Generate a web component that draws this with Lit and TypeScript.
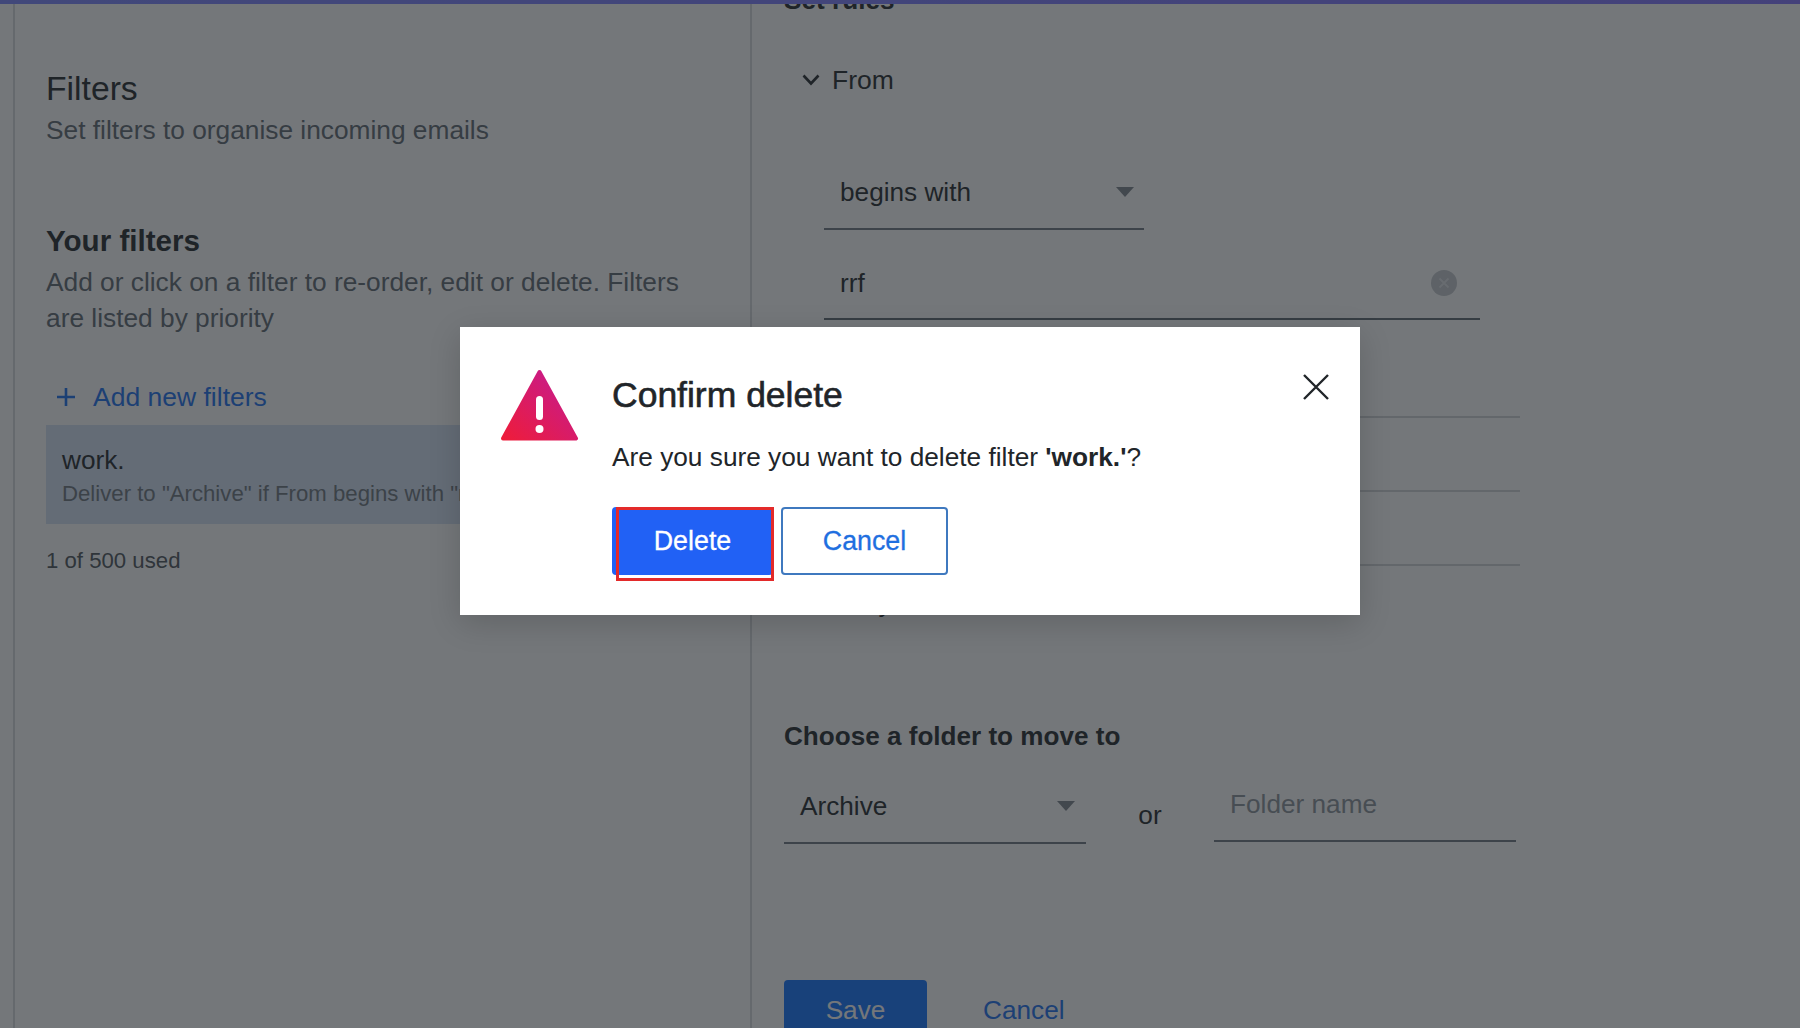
import { LitElement, html, css } from "lit";
import { customElement } from "lit/decorators.js";

@customElement("app-root")
export class AppRoot extends LitElement {
  static styles = css`
    :host { display: block; width: 1800px; height: 1028px; position: relative; overflow: hidden; background: #fff; font-family: "Liberation Sans", Arial, sans-serif; color: #212529; }
    .bar { height: 4px; position: relative; z-index: 1; background: linear-gradient(90deg, #7a84ff, #8072ff); }
    .page { display: flex; height: 1024px; overflow: hidden; }
    .rail { width: 13px; border-right: 2px solid #d8dadc; flex: none; }
    .left { width: 737px; flex: none; padding: 64px 0 0 31px; box-sizing: border-box; border-right: 2px solid #d8dadc; }
    .right { flex: 1; padding-left: 32px; margin-top: -22px; }
    h1 { margin: 0; font-size: 33.7px; line-height: 40px; font-weight: 400; height: 40px; }
    .muted { color: #5d6670; font-size: 26.3px; line-height: 36px; }
    .sub { margin-top: 4px; }
    h2 { margin: 75px 0 0; font-size: 29.6px; line-height: 36px; font-weight: 700; }
    .desc { margin-top: 5px; width: 660px; }
    .add { display: flex; align-items: center; gap: 18px; margin: 43px 0 0 11px; height: 36px; color: #1a6ef0; font-size: 26.5px; }
    .row { margin-top: 10px; height: 99px; width: 670px; box-sizing: border-box; padding: 17px 16px; background: #d5e2f5; }
    .row .name { font-size: 26.2px; line-height: 36px; height: 36px; }
    .row .rule { font-size: 22.2px; line-height: 32px; color: #6c757d; white-space: nowrap; }
    .used { margin-top: 19px; font-size: 22.2px; line-height: 36px; color: #4a5158; }
    .h3 { font-size: 26.2px; font-weight: 700; line-height: 36px; height: 36px; }
    .collapse { display: flex; align-items: center; gap: 12px; margin: 44px 0 0 18px; height: 36px; font-size: 26.5px; }
    .select { display: flex; align-items: center; justify-content: space-between; box-sizing: border-box; border-bottom: 2px solid #6f7880; font-size: 26.2px; padding: 0 10px 0 16px; color: #212529; }
    .caret { width: 0; height: 0; border-left: 9px solid transparent; border-right: 9px solid transparent; border-top: 10px solid #7d848b; }
    .s1 { width: 320px; height: 78px; margin: 54px 0 0 40px; padding-top: 8px; padding-bottom: 4px; }
    .input { display: flex; align-items: center; justify-content: space-between; box-sizing: border-box; width: 656px; height: 90px; margin-left: 40px; padding: 18px 23px 0 16px; border-bottom: 2px solid #5d6670; font-size: 26.2px; }
    .clear { width: 26px; height: 26px; }
    .ruleline { margin-left: 18px; width: 718px; height: 74px; box-sizing: border-box; display: flex; align-items: center; gap: 14px; font-size: 26.2px; border-bottom: 2px solid #d2d5d8; }
    .first { height: 98px; }
    .plain { border-bottom: none; margin-top: 19px; height: 36px; }
    .body { margin-left: 30px; }
    .folder { margin-top: 97px; height: 36px; line-height: 36px; font-size: 26.1px; font-weight: 700; }
    .choose { display: flex; align-items: flex-start; margin-top: 20px; }
    .s2 { width: 302px; height: 70px; padding: 0 11px 4px 16px; }
    .or { width: 128px; text-align: center; font-size: 26.2px; line-height: 36px; margin-top: 23px; }
    .ph { width: 302px; height: 68px; box-sizing: border-box; padding: 0 16px 6px; display: flex; align-items: center; font-size: 26.2px; color: #8a9199; border-bottom: 2px solid #6f7880; }
    .actions { display: flex; align-items: center; margin-top: 136px; gap: 56px; }
    .save { width: 143px; height: 60px; border-radius: 4px; background: #0f72ff; color: #fff; display: flex; align-items: center; justify-content: center; font-size: 26.2px; }
    .link { color: #1a6ef0; font-size: 26.2px; }
    .overlay { position: absolute; inset: 0; z-index: 2; background: rgba(31, 36, 41, .62); display: flex; align-items: flex-start; justify-content: center; padding-top: 327px; box-sizing: border-box; }
    .modal { position: relative; width: 900px; height: 288px; box-sizing: border-box; margin-left: 20px; background: #fff; box-shadow: 0 8px 30px rgba(0, 0, 0, .16); display: flex; padding: 41px 0 0 40px; gap: 33px; }
    .warn { width: 79px; height: 73px; flex: none; margin-top: 1px; }
    .title { font-size: 35.5px; font-weight: 400; line-height: 40px; margin-top: 7px; -webkit-text-stroke: .6px #212529; }
    .msg { font-size: 26.25px; line-height: 36px; margin-top: 24px; white-space: nowrap; }
    .btns { display: flex; gap: 8px; margin-top: 32px; }
    .btn { height: 68px; box-sizing: border-box; border-radius: 4px; display: flex; align-items: center; justify-content: center; font-size: 26.8px; }
    .del { width: 161px; background: #2161f5; color: #fff; -webkit-text-stroke: .3px #fff; }
    .can { width: 167px; border: 2px solid #3f79bf; color: #1f6fe0; -webkit-text-stroke: .3px #1f6fe0; }
    .focus { position: absolute; left: 156px; top: 180px; width: 158px; height: 74px; box-sizing: border-box; border: 3px solid #e32a2a; }
    .close { position: absolute; left: 843px; top: 47px; width: 26px; height: 26px; }
  `;

  render() {
    return html`
      <div class="bar"></div>
      <div class="page">
        <div class="rail"></div>
        <div class="left">
          <h1>Filters</h1>
          <div class="muted sub">Set filters to organise incoming emails</div>
          <h2>Your filters</h2>
          <div class="muted desc">Add or click on a filter to re-order, edit or delete. Filters are listed by priority</div>
          <div class="add">
            <svg width="18" height="18" viewBox="0 0 18 18"><path d="M9 0v18M0 9h18" stroke="#1a6ef0" stroke-width="2.6" fill="none"/></svg>
            <span>Add new filters</span>
          </div>
          <div class="row">
            <div class="name">work.</div>
            <div class="rule">Deliver to "Archive" if From begins with "rrf"</div>
          </div>
          <div class="used">1 of 500 used</div>
        </div>
        <div class="right">
          <div class="h3">Set rules</div>
          <div class="collapse">
            <svg width="18" height="12" viewBox="0 0 18 12"><path d="M1.5 1.5L9 9.5l7.5-8" stroke="#212529" stroke-width="2.6" fill="none"/></svg>
            <span>From</span>
          </div>
          <div class="select s1"><span>begins with</span><i class="caret"></i></div>
          <div class="input">
            <span>rrf</span>
            <svg class="clear" viewBox="0 0 26 26"><circle cx="13" cy="13" r="13" fill="#c4c8cc"/><path d="M8.5 8.5l9 9M17.5 8.5l-9 9" stroke="#dfe2e5" stroke-width="1.8"/></svg>
          </div>
          <div class="ruleline first"><span>To</span></div>
          <div class="ruleline"><span>Subject</span></div>
          <div class="ruleline"><span>Cc</span></div>
          <div class="ruleline plain"><span class="body">Body</span></div>
          <div class="folder">Choose a folder to move to</div>
          <div class="choose">
            <div class="select s2"><span>Archive</span><i class="caret"></i></div>
            <div class="or">or</div>
            <div class="ph">Folder name</div>
          </div>
          <div class="actions">
            <div class="save">Save</div>
            <div class="link">Cancel</div>
          </div>
        </div>
      </div>
      <div class="overlay">
        <div class="modal">
          <svg class="warn" viewBox="0 0 79 73">
            <defs><linearGradient id="g" x1="0" y1="1" x2="1" y2="0"><stop offset="0" stop-color="#ee1c3a"/><stop offset="1" stop-color="#c21b96"/></linearGradient></defs>
            <path d="M39.5 3L76 69.5H3Z" fill="url(#g)" stroke="url(#g)" stroke-width="4" stroke-linejoin="round"/>
            <rect x="36" y="27" width="7" height="24" rx="3.5" fill="#fff"/>
            <circle cx="39.5" cy="60" r="4" fill="#fff"/>
          </svg>
          <div>
            <div class="title">Confirm delete</div>
            <div class="msg">Are you sure you want to delete filter <b>'work.'</b>?</div>
            <div class="btns">
              <div class="btn del">Delete</div>
              <div class="btn can">Cancel</div>
            </div>
          </div>
          <div class="focus"></div>
          <svg class="close" viewBox="0 0 26 26"><path d="M1 1l24 24M25 1L1 25" stroke="#212529" stroke-width="2.4" fill="none"/></svg>
        </div>
      </div>
    `;
  }
}
